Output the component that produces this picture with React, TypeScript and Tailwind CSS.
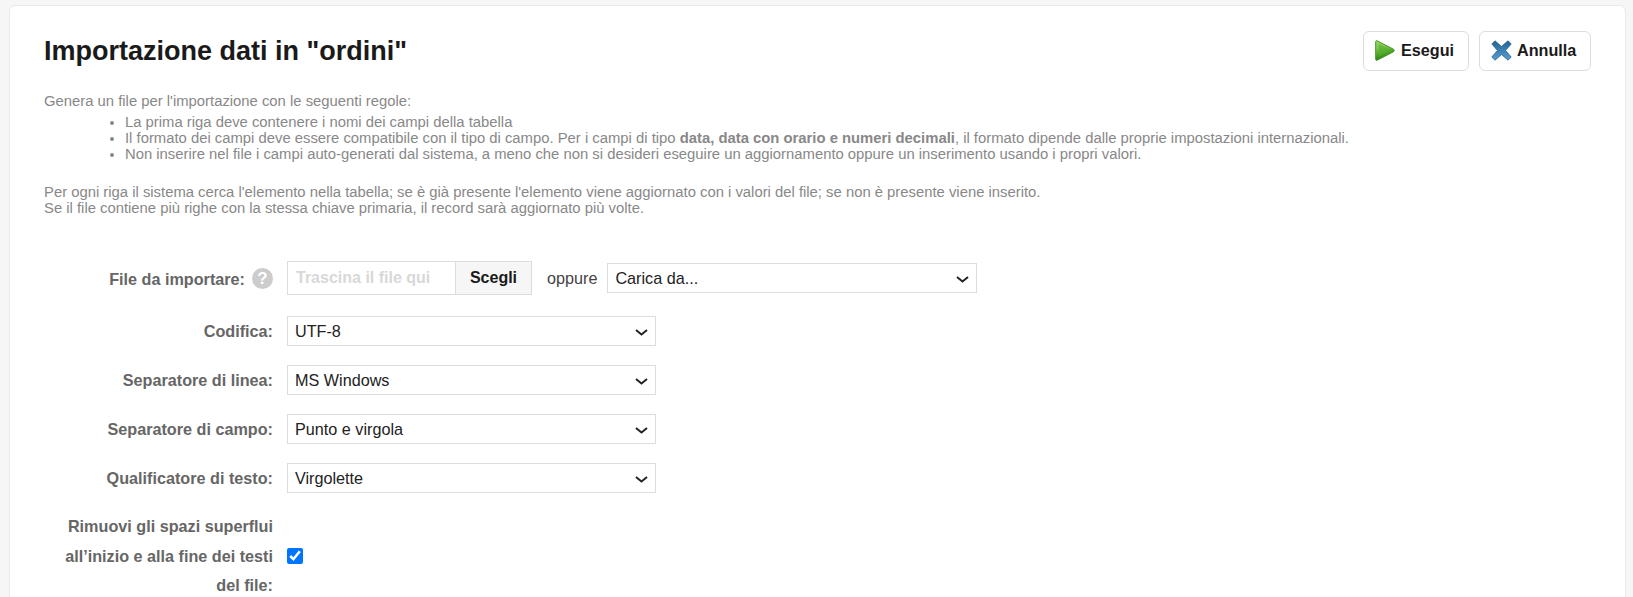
const font = "font-['Liberation_Sans',Arial,sans-serif]";

function PlayIcon() {
  return (
    <svg width="20" height="21" viewBox="0 0 20 21" className="shrink-0">
      <defs>
        <linearGradient id="pg" x1="0" y1="0" x2="0.25" y2="1">
          <stop offset="0" stopColor="#9ed66f" />
          <stop offset="0.45" stopColor="#6fc040" />
          <stop offset="0.8" stopColor="#3f9a1e" />
          <stop offset="1" stopColor="#2f7a14" />
        </linearGradient>
      </defs>
      <path d="M2.2 0.8 L18.6 9.2 Q20 10.5 18.6 11.8 L2.2 20.2 Q0.6 20.8 0.6 19 L0.6 2 Q0.6 0.2 2.2 0.8 Z" fill="url(#pg)" stroke="#3c8a1c" strokeWidth="0.8" />
      <path d="M4 4.5 L16 10.5 L4 16.5 Z" fill="#57ad2e" opacity="0.55" />
    </svg>
  );
}

function CrossIcon() {
  return (
    <svg width="21" height="21" viewBox="0 0 21 21" className="shrink-0">
      <defs>
        <linearGradient id="xg" x1="0" y1="0" x2="0" y2="1">
          <stop offset="0" stopColor="#22608f" />
          <stop offset="0.45" stopColor="#3a7fb3" />
          <stop offset="1" stopColor="#5a9fd0" />
        </linearGradient>
      </defs>
      <path d="M4 0.8 L10.5 6.5 L17 0.8 L20.2 4 L14.5 10.5 L20.2 17 L17 20.2 L10.5 14.5 L4 20.2 L0.8 17 L6.5 10.5 L0.8 4 Z" fill="url(#xg)" stroke="#2a5f88" strokeWidth="0.8" strokeLinejoin="round" />
    </svg>
  );
}

function Select({ value, wide }: { value: string; wide?: boolean }) {
  return (
    <div className="relative">
      <select
        defaultValue={value}
        className={`block h-[30px] ${wide ? "w-[370px]" : "w-[369px]"} appearance-none border border-[#ddd] bg-white pl-[7px] text-[16.2px] text-[#222] outline-none`}
      >
        <option>{value}</option>
        <option>Altro</option>
      </select>
      <svg width="13" height="7" viewBox="0 0 13 7" className="pointer-events-none absolute right-[8px] top-[13px]">
        <path d="M1 1 L6.5 5.5 L12 1" fill="none" stroke="#222" strokeWidth="2" />
      </svg>
    </div>
  );
}

function Row({ label, children }: { label: string; children: React.ReactNode }) {
  return (
    <div className="flex items-center gap-[14px]">
      <label className="w-[229px] text-right text-[16.2px] font-bold text-[#666]">{label}</label>
      {children}
    </div>
  );
}

export default function App() {
  return (
    <div className={`${font} h-[597px] overflow-hidden bg-[#f6f6f6] pl-[9px] pr-[7px] pt-[5px]`}>
      <div className="h-[700px] rounded-t-md border border-[#e9e9e9] bg-white pl-[34px] pr-[34px] pt-[25px]">
        <div className="flex items-start justify-between">
          <h1 className="mt-[4px] text-[27px] leading-[32px] font-bold text-[#1a1a1a]">Importazione dati in "ordini"</h1>
          <div className="flex gap-[10px]">
            <button className="flex h-[40px] w-[106px] items-center gap-[6px] rounded-md border border-[#ddd] bg-white pb-[2px] pl-[11px] text-[16.2px] font-bold text-[#1a1a1a]">
              <PlayIcon />
              Esegui
            </button>
            <button className="flex h-[40px] w-[112px] items-center gap-[5px] rounded-md border border-[#ddd] bg-white pb-[2px] pl-[11px] text-[16.2px] font-bold text-[#1a1a1a]">
              <CrossIcon />
              Annulla
            </button>
          </div>
        </div>

        <div className="mt-[22px] text-[14.83px] leading-[16px] text-[#888]">
          <p>Genera un file per l'importazione con le seguenti regole:</p>
          <ul className="mt-[5px] list-disc pl-[81px]">
            <li>La prima riga deve contenere i nomi dei campi della tabella</li>
            <li>
              Il formato dei campi deve essere compatibile con il tipo di campo. Per i campi di tipo{" "}
              <b>data, data con orario e numeri decimali</b>, il formato dipende dalle proprie impostazioni internazionali.
            </li>
            <li>Non inserire nel file i campi auto-generati dal sistema, a meno che non si desideri eseguire un aggiornamento oppure un inserimento usando i propri valori.</li>
          </ul>
          <p className="mt-[22px]">
            Per ogni riga il sistema cerca l'elemento nella tabella; se è già presente l'elemento viene aggiornato con i valori del file; se non è presente viene inserito.
            <br />
            Se il file contiene più righe con la stessa chiave primaria, il record sarà aggiornato più volte.
          </p>
        </div>

        <div className="mt-[45px] flex flex-col">
          <div className="flex items-center gap-[14px]">
            <div className="flex w-[229px] items-center justify-end gap-[7px] pt-[2px]">
              <label className="text-[16.2px] font-bold text-[#666]">File da importare:</label>
              <span className="flex h-[21px] w-[21px] items-center justify-center rounded-full bg-[#ccc] text-[17px] font-bold text-white">?</span>
            </div>
            <div className="flex h-[34px] w-[245px] border border-[#ddd]">
              <span className="flex flex-1 items-center pl-[8px] text-[16px] font-bold text-[#d8d8d8]">Trascina il file qui</span>
              <span className="flex w-[76px] items-center justify-center border-l border-[#ddd] bg-[#f6f6f6] text-[16px] font-bold text-[#1a1a1a]">Scegli</span>
            </div>
            <span className="ml-[1px] text-[16.2px] text-[#444]">oppure</span>
            <span className="-ml-[4px]"><Select value="Carica da..." wide /></span>
          </div>
          <div className="mt-[21px] flex flex-col gap-[19px]">
            <Row label="Codifica:"><Select value="UTF-8" /></Row>
            <Row label="Separatore di linea:"><Select value="MS Windows" /></Row>
            <Row label="Separatore di campo:"><Select value="Punto e virgola" /></Row>
            <Row label="Qualificatore di testo:"><Select value="Virgolette" /></Row>
          </div>
          <div className="mt-[19px] flex items-center gap-[14px]">
            <label className="w-[229px] text-right text-[16.2px] leading-[29.5px] font-bold text-[#666]">
              Rimuovi gli spazi superflui all’inizio e alla fine dei testi del file:
            </label>
            <input type="checkbox" defaultChecked className="h-[16px] w-[16px]" />
          </div>
        </div>
      </div>
    </div>
  );
}
